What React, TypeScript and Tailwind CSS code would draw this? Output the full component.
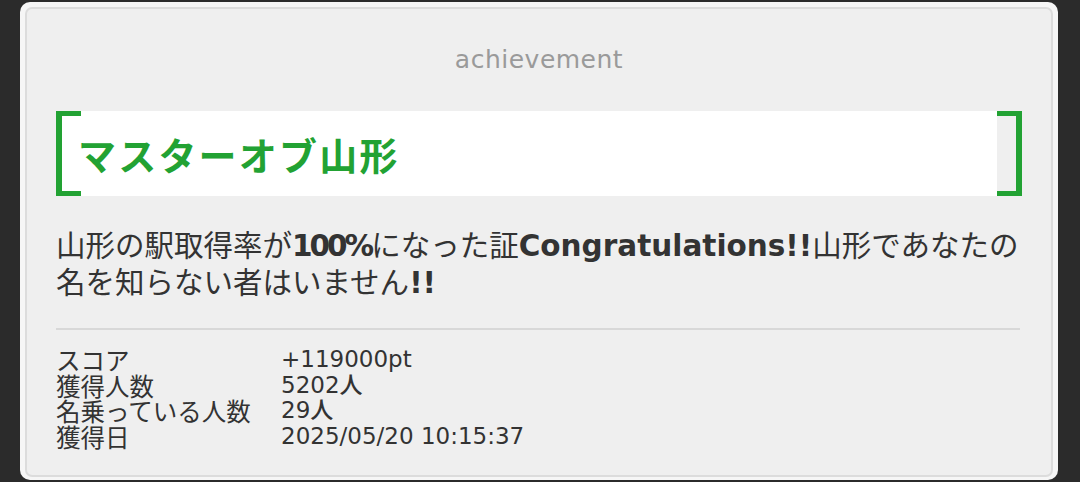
const latin = '"DejaVu Sans", "Noto Sans CJK JP", sans-serif';

const stats = [
  { label: "スコア", value: "+119000pt" },
  { label: "獲得人数", value: "5202人" },
  { label: "名乗っている人数", value: "29人" },
  { label: "獲得日", value: "2025/05/20 10:15:37" },
];

function Bracket({ side }: { side: "left" | "right" }) {
  return (
    <div
      className={
        side === "left"
          ? "h-[85px] w-[25px] shrink-0 border-y-[5px] border-l-[6px] border-[#22a233]"
          : "h-[85px] w-[25px] shrink-0 border-y-[5px] border-r-[6px] border-[#22a233]"
      }
    />
  );
}

export default function App() {
  return (
    <div className="h-[482px] overflow-hidden bg-[#2b2b2b] pl-[20px] pr-[22px] pt-[2px]" style={{ fontFamily: '"Noto Sans CJK JP", sans-serif' }}>
      <div className="h-[478px] rounded-[10px] bg-[#f6f6f6] px-[5px] pb-[3px] pt-[5px]">
        <div className="h-full rounded-[7px] border-2 border-[#dcdcdc] bg-[#efefef] px-[29px] pt-[36px]">
          <p className="text-center text-[25px] leading-[30px] tracking-[0.5px] text-[#9a9a9a]" style={{ fontFamily: latin }}>
            achievement
          </p>

          <div className="mt-[36px] flex items-stretch">
            <div className="flex flex-1 items-center bg-white">
              <Bracket side="left" />
              <h1 className="ml-[-3px] text-[38px] font-bold leading-none tracking-[2.2px] text-[#22a233]">マスターオブ山形</h1>
            </div>
            <Bracket side="right" />
          </div>

          <p className="mt-[30px] text-[29.5px] leading-[34px] text-[#333]">
            <span className="whitespace-nowrap">
              山形の駅取得率が<span className="font-semibold tracking-[-3px]" style={{ fontFamily: latin }}>100%</span>になった証
              <span className="font-bold" style={{ fontFamily: latin }}>Congratulations!!</span>山形であなたの
            </span>
            <br />
            名を知らない者はいません<span className="font-bold" style={{ fontFamily: latin }}>!!</span>
          </p>

          <div className="mt-[28px] mr-[2px] h-[2px] bg-[#d8d8d8]" />

          <div className="mt-[17px] grid grid-cols-[225px_1fr] text-[24.5px] leading-[25.5px] text-[#333]">
            {stats.map((s) => (
              <div key={s.label} className="contents">
                <span className="whitespace-nowrap">{s.label}</span>
                <span className="text-[23px] font-medium" style={{ fontFamily: latin }}>{s.value}</span>
              </div>
            ))}
          </div>
        </div>
      </div>
    </div>
  );
}
